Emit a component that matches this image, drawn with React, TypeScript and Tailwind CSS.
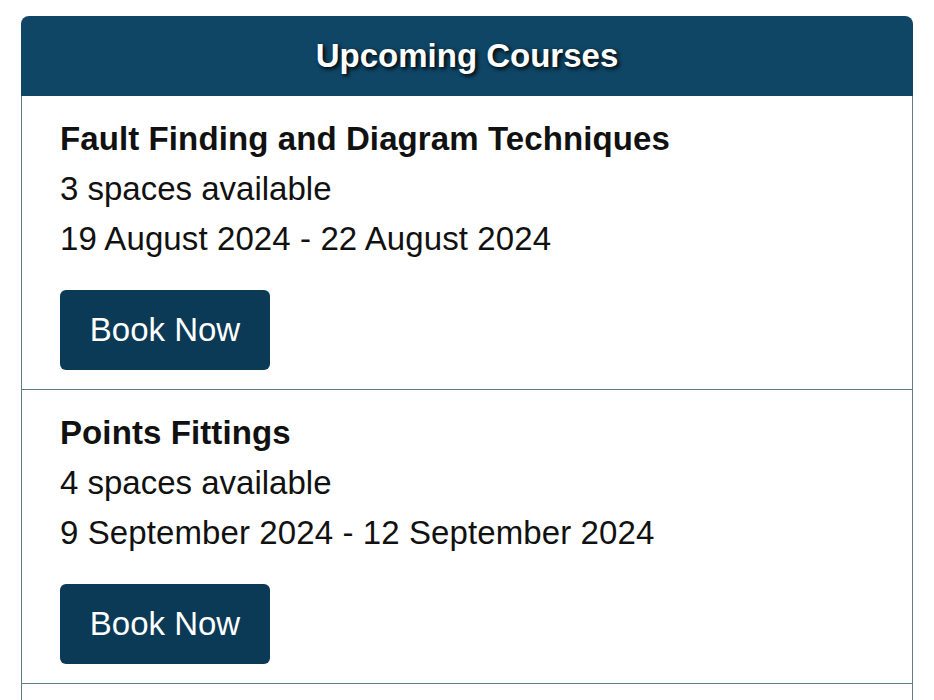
import React from "react";

const courses = [
  { title: "Fault Finding and Diagram Techniques", spaces: "3 spaces available", dates: "19 August 2024 - 22 August 2024" },
  { title: "Points Fittings", spaces: "4 spaces available", dates: "9 September 2024 - 12 September 2024" },
];

export default function App() {
  return (
    <div className="h-[700px] overflow-hidden bg-white pl-[21px] pr-[21px] pt-[16px]" style={{ fontFamily: '"Liberation Sans", Arial, sans-serif' }}>
      <div className="w-[892px]">
        <div className="flex h-[80px] items-center justify-center rounded-t-[8px] bg-[#0f4666]">
          <h2 className="text-[33px] font-bold text-white [text-shadow:2px_2px_4px_#000]">Upcoming Courses</h2>
        </div>
        <div className="border-x border-[#627d87]">
          {courses.map((c, i) => (
            <div key={i} className="border-b border-[#627d87] pl-[38px] pt-[18px] pb-[19px]">
              <div className="text-[33px] font-bold leading-[50px] tracking-[0.1px] text-[#111]">{c.title}</div>
              <div className="text-[33px] leading-[50px] text-[#111]">{c.spaces}</div>
              <div className="text-[33px] leading-[50px] tracking-[0.1px] text-[#111]">{c.dates}</div>
              <button className="mt-[26px] flex h-[80px] w-[210px] items-center justify-center rounded-[6px] bg-[#0b3a56] text-[33px] text-white">
                Book Now
              </button>
            </div>
          ))}
          <div className="h-[40px]" />
        </div>
      </div>
    </div>
  );
}
